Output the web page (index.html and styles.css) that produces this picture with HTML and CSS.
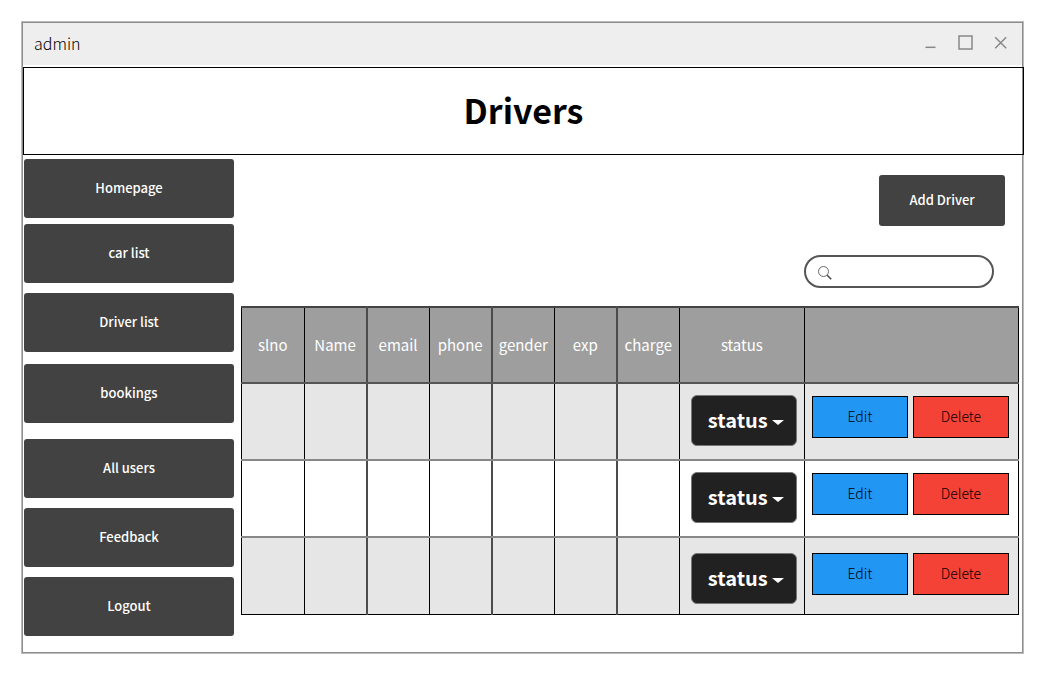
FILE: index.html
```html
<!DOCTYPE html>
<html lang="en">
<head>
<meta charset="utf-8">
<title>admin</title>
<link rel="stylesheet" href="styles.css">
</head>
<body>
<div class="window">
  <div class="titlebar">
    <span class="titlebar-name">admin</span>
    <div class="window-controls">
      <button type="button" aria-label="Minimize"><svg width="16" height="16" viewBox="0 0 16 16"><path d="M3.5 12.3h10"/></svg></button>
      <button type="button" aria-label="Maximize"><svg width="16" height="16" viewBox="0 0 16 16"><rect x="2" y="1" width="13" height="13"/></svg></button>
      <button type="button" aria-label="Close"><svg width="16" height="16" viewBox="0 0 16 16"><path d="M3.2 2.2l11 11M14.2 2.2l-11 11"/></svg></button>
    </div>
  </div>
  <header class="banner"><h1>Drivers</h1></header>
  <div class="layout">
    <nav class="sidebar">
      <button type="button" class="dark-button">Homepage</button>
      <button type="button" class="dark-button space-s">car list</button>
      <button type="button" class="dark-button space-m">Driver list</button>
      <button type="button" class="dark-button space-l">bookings</button>
      <button type="button" class="dark-button space-xl">All users</button>
      <button type="button" class="dark-button space-m">Feedback</button>
      <button type="button" class="dark-button space-m">Logout</button>
    </nav>
    <main class="content">
      <div class="toolbar">
        <button type="button" class="dark-button add-button">Add Driver</button>
        <label class="search">
          <svg width="14" height="14" viewBox="0 0 14 14" aria-hidden="true"><circle cx="5.5" cy="5.5" r="5"/><path class="handle" d="M9.2 9.2l4 4"/></svg>
          <input type="search" aria-label="Search drivers">
        </label>
      </div>
      <table class="drivers">
        <colgroup><col class="col-field" span="7"><col class="col-status"><col class="col-actions"></colgroup>
        <thead>
          <tr><th>slno</th><th>Name</th><th>email</th><th>phone</th><th>gender</th><th>exp</th><th>charge</th><th>status</th><th></th></tr>
        </thead>
        <tbody>
          <tr>
            <td></td><td></td><td></td><td></td><td></td><td></td><td></td>
            <td class="status-cell"><div class="status"><select aria-label="Status of driver 1"><option>status</option></select><svg width="12" height="5" viewBox="0 0 12 5" aria-hidden="true"><path d="M0 0h12L6 5z"/></svg></div></td>
            <td><div class="actions"><button type="button" class="edit">Edit</button><button type="button" class="delete">Delete</button></div></td>
          </tr>
          <tr>
            <td></td><td></td><td></td><td></td><td></td><td></td><td></td>
            <td class="status-cell"><div class="status"><select aria-label="Status of driver 2"><option>status</option></select><svg width="12" height="5" viewBox="0 0 12 5" aria-hidden="true"><path d="M0 0h12L6 5z"/></svg></div></td>
            <td><div class="actions"><button type="button" class="edit">Edit</button><button type="button" class="delete">Delete</button></div></td>
          </tr>
          <tr class="last">
            <td></td><td></td><td></td><td></td><td></td><td></td><td></td>
            <td class="status-cell"><div class="status"><select aria-label="Status of driver 3"><option>status</option></select><svg width="12" height="5" viewBox="0 0 12 5" aria-hidden="true"><path d="M0 0h12L6 5z"/></svg></div></td>
            <td><div class="actions"><button type="button" class="edit">Edit</button><button type="button" class="delete">Delete</button></div></td>
          </tr>
        </tbody>
      </table>
    </main>
  </div>
</div>
</body>
</html>
```
FILE: styles.css
```css
* {
  box-sizing: border-box;
}

body {
  margin: 0;
  padding: 22px 27px 26px 22px;
  background: #fff;
  font-family: "Noto Sans CJK SC", "Noto Sans", sans-serif;
  font-size: 14px;
}

button, input, select {
  font: inherit;
  margin: 0;
}

.window {
  border: 1px solid #8c8c8c;
  box-shadow: 0 0 0 1px #bbb;
}

.titlebar {
  display: flex;
  align-items: center;
  justify-content: space-between;
  height: 42px;
  margin-bottom: 2px;
  padding: 0 14px 2px 11px;
  background: #eee;
}

.titlebar-name {
  font-size: 16px;
  font-weight: 300;
  line-height: 24px;
  color: #000;
}

.window-controls {
  display: flex;
  gap: 19px;
}

.window-controls button {
  display: flex;
  padding: 0;
  border: 0;
  background: none;
}

.window-controls svg {
  fill: none;
  stroke: #888;
  stroke-width: 1.5;
}

.banner {
  display: flex;
  align-items: center;
  justify-content: center;
  min-height: 88px;
  margin-right: -2px;
  padding-bottom: 2px;
  border: 1px solid #000;
}

h1 {
  margin: 0;
  font-size: 34px;
  font-weight: 700;
  line-height: 48px;
}

.layout {
  display: flex;
  gap: 7px;
  padding: 4px 3px 16px 1px;
}

.sidebar {
  display: flex;
  flex: 0 0 210px;
  flex-direction: column;
}

.dark-button {
  height: 59px;
  padding: 0 16px 2px;
  border: 0;
  border-radius: 3px;
  background: #424242;
  color: #fff;
  font-size: 13px;
  font-weight: 500;
}

.space-s { margin-top: 6px; }
.space-m { margin-top: 10px; }
.space-l { margin-top: 12px; }
.space-xl { margin-top: 16px; }

.content {
  flex: 1;
  min-width: 0;
}

.toolbar {
  display: flex;
  flex-direction: column;
  align-items: flex-end;
  gap: 29px;
  padding: 16px 14px 18px;
}

.add-button {
  width: 126px;
  height: 51px;
}

.search {
  display: flex;
  align-items: center;
  gap: 8px;
  width: 190px;
  height: 33px;
  margin-right: 11px;
  padding: 3px 12px 0;
  border: 2px solid #555;
  border-radius: 17px;
}

.search svg {
  flex: none;
  fill: none;
  stroke: #444;
  stroke-width: 0.8;
}

.search .handle {
  stroke-width: 1.5;
}

.search input {
  flex: 1;
  min-width: 0;
  padding: 0;
  border: 0;
  outline: 0;
  background: none;
}

.drivers {
  width: 100%;
  table-layout: fixed;
  border-collapse: collapse;
}

.col-field { width: 50px; }
.col-status { width: 100px; }
.col-actions { width: 171px; }

.drivers th,
.drivers td {
  height: 77px;
  padding: 0;
  border: 1px solid #000;
}

.drivers th {
  height: 76px;
  padding-bottom: 2px;
  border-top: 2px solid #444;
  border-bottom: 2px solid #555;
  background: #9e9e9e;
  color: #fff;
  font-size: 15px;
  font-weight: 400;
}

.drivers td {
  padding-top: 12px;
  border-bottom: 2px solid #888;
  background: #fff;
  vertical-align: top;
}

.drivers tr > :nth-child(2),
.drivers tr > :nth-child(4),
.drivers tr > :nth-child(6) {
  border-right: 2px solid #4c4c4c;
}

.drivers tbody tr:nth-child(odd) td {
  background: #e6e6e6;
}

.drivers .status-cell {
  padding-top: 11px;
}

.drivers .last td {
  padding-top: 15px;
  border-bottom: 1px solid #000;
}

.status {
  position: relative;
  width: 106px;
  height: 51px;
  margin-left: 11px;
}

.status select {
  width: 100%;
  height: 100%;
  padding: 0 16px 2px;
  border: 1px solid #777;
  border-radius: 6px;
  appearance: none;
  background: #212121;
  color: #fff;
  font-size: 20px;
  font-weight: 700;
}

.status svg {
  position: absolute;
  top: 25px;
  right: 13px;
  fill: #fff;
  pointer-events: none;
}

.actions {
  display: flex;
  gap: 5px;
  padding-left: 7px;
}

.actions button {
  width: 96px;
  height: 42px;
  padding: 0 0 2px;
  border: 1px solid #000;
  color: #000;
  font-weight: 300;
}

.actions .edit { background: #2196f3; }
.actions .delete { background: #f44336; }
```
